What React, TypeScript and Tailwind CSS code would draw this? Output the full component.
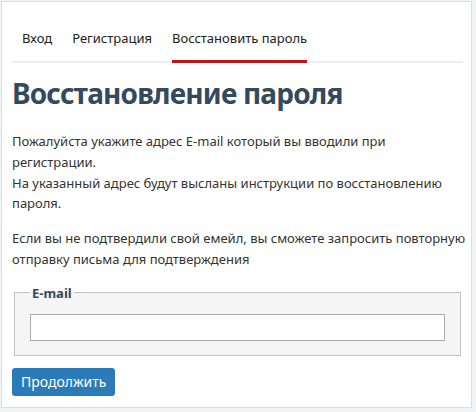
import React, { useState } from 'react';

const tabs = ['Вход', 'Регистрация', 'Восстановить пароль'];

export default function App() {
  const [email, setEmail] = useState('');
  const active = 2;

  return (
    <div className="min-h-[412px] bg-[#f3f4f5] p-px" style={{ fontFamily: '"Noto Sans", "Open Sans", sans-serif' }}>
      <div className="w-[471px] h-[407px] bg-white border border-[#dcdcdc] pl-[10px] pr-[8px] text-[#333]">
        {/* вкладки */}
        <div className="mt-[26px] flex border-b-2 border-[#eeeeee] text-[13px] leading-[20px] text-[#222]">
          {tabs.map((tab, i) => (
            <div
              key={tab}
              className={
                i === active
                  ? 'mx-[10px] pb-[12px] -mb-[2px] border-b-[3px] border-[#c4121a]'
                  : 'mx-[10px] pb-[12px]'
              }
            >
              {tab}
            </div>
          ))}
        </div>

        <h1 className="mt-[12px] text-[28px] font-bold leading-[36px] tracking-[-0.8px] text-[#34495e]">
          Восстановление пароля
        </h1>

        <p className="mt-[20px] text-[13px] leading-[20.8px]">
          Пожалуйста укажите адрес E-mail который вы вводили при регистрации.
          <br />
          На указанный адрес будут высланы инструкции по восстановлению пароля.
        </p>
        <p className="mt-[14px] -mr-[6px] text-[13px] leading-[20.8px]">
          Если вы не подтвердили свой емейл, вы сможете запросить повторную отправку письма для подтверждения
        </p>

        <fieldset className="mt-[14px] mx-[2px] border border-[#c2c2c2] bg-[#f5f5f5] px-[15px] pb-[14px] pt-[12px]">
          <legend className="px-[2px] text-[13px] leading-[18px] font-bold text-[#34495e]">E-mail</legend>
          <input
            type="text"
            value={email}
            onChange={(e) => setEmail(e.target.value)}
            className="block w-full h-[27px] bg-white border border-[#aaaaaa] px-2 text-[13px] outline-none"
          />
        </fieldset>

        <button className="mt-[12px] h-[28px] px-[9px] rounded-[3px] bg-[#2a7bb8] text-white text-[14px]">
          Продолжить
        </button>
      </div>
    </div>
  );
}
